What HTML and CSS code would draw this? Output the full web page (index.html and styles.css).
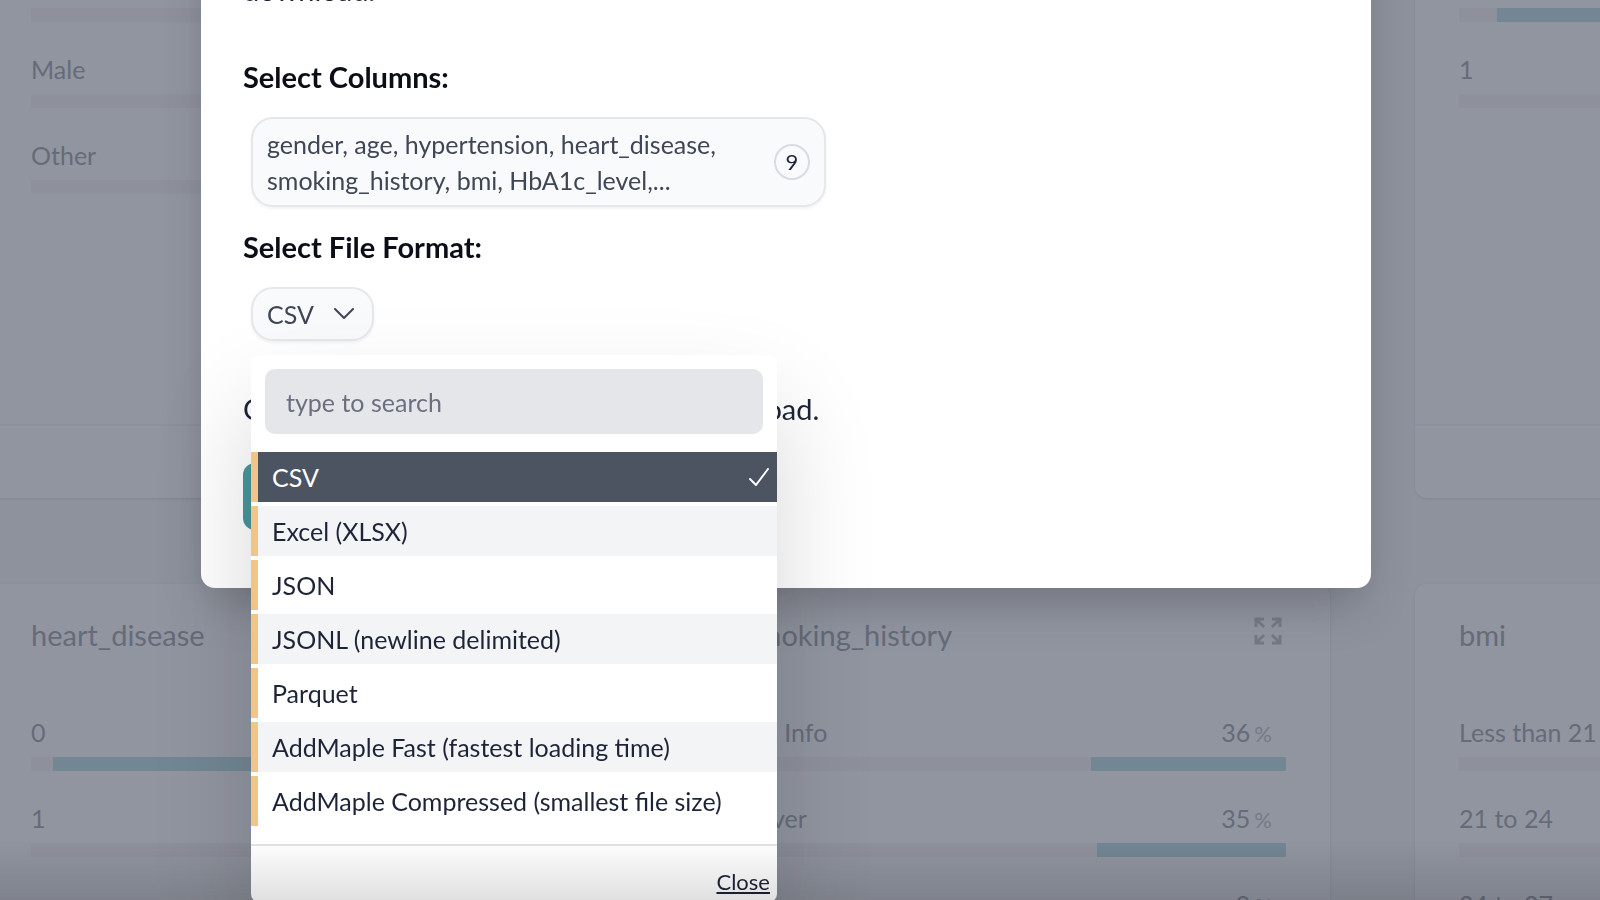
FILE: index.html
```html
<!DOCTYPE html>
<html lang="en">
<head>
    <meta charset="UTF-8">
    <meta name="viewport" content="width=device-width, initial-scale=1.0">
    <title>AddMaple - Download Data</title>
    <link rel="stylesheet" href="styles.css">
</head>
<body>
    <main class="board">
        <section class="card">
            <header class="card-header"><h2>gender</h2></header>
            <div class="row"><div class="row-label"><span>Female</span></div><div class="bar"><div class="fill" style="width: 58%"></div></div></div>
            <div class="row"><div class="row-label"><span>Male</span></div><div class="bar"><div class="fill" style="width: 41%"></div></div></div>
            <div class="row"><div class="row-label"><span>Other</span></div><div class="bar"></div></div>
            <footer class="card-footer"></footer>
        </section>
        <section class="card">
            <header class="card-header"><h2>age</h2></header>
            <footer class="card-footer"></footer>
        </section>
        <section class="card">
            <header class="card-header"><h2>hypertension</h2></header>
            <div class="row"><div class="row-label"><span>0</span></div><div class="bar"><div class="fill" style="width: 93%"></div></div></div>
            <div class="row"><div class="row-label"><span>1</span></div><div class="bar"><div class="fill" style="width: 7%"></div></div></div>
            <footer class="card-footer"></footer>
        </section>
        <section class="card">
            <header class="card-header"><h2>heart_disease</h2></header>
            <div class="row"><div class="row-label"><span>0</span></div><div class="bar"><div class="fill" style="width: 96%"></div></div></div>
            <div class="row"><div class="row-label"><span>1</span></div><div class="bar"><div class="fill" style="width: 4%"></div></div></div>
            <footer class="card-footer"></footer>
        </section>
        <section class="card">
            <header class="card-header">
                <h2>smoking_history</h2>
                <svg class="expand" viewBox="0 0 28 28" width="28" height="28" fill="none" stroke="currentColor" stroke-width="3">
                    <path d="M2 10V2h8M2 2l8 8M18 2h8v8M26 2l-8 8M2 18v8h8M2 26l8-8M18 26h8v-8M26 26l-8-8"/>
                </svg>
            </header>
            <div class="row"><div class="row-label"><span>No Info</span><span>36<small>%</small></span></div><div class="bar"><div class="fill" style="width: 36%"></div></div></div>
            <div class="row"><div class="row-label"><span>never</span><span>35<small>%</small></span></div><div class="bar"><div class="fill" style="width: 35%"></div></div></div>
            <div class="row"><div class="row-label"><span>former</span><span>9<small>%</small></span></div><div class="bar"><div class="fill" style="width: 9%"></div></div></div>
            <footer class="card-footer"></footer>
        </section>
        <section class="card">
            <header class="card-header"><h2>bmi</h2></header>
            <div class="row"><div class="row-label"><span>Less than 21</span></div><div class="bar"><div class="fill" style="width: 14%"></div></div></div>
            <div class="row"><div class="row-label"><span>21 to 24</span></div><div class="bar"><div class="fill" style="width: 14%"></div></div></div>
            <div class="row"><div class="row-label"><span>24 to 27</span></div><div class="bar"><div class="fill" style="width: 14%"></div></div></div>
            <footer class="card-footer"></footer>
        </section>
    </main>

    <div class="overlay">
        <div class="modal" role="dialog" aria-label="Download data">
            <p class="intro">Choose the columns and the file format to<br>download.</p>

            <h3>Select Columns:</h3>
            <button type="button" class="picker columns">
                <span class="columns-text">gender, age, hypertension, heart_disease, smoking_history, bmi, HbA1c_level,...</span>
                <span class="count">9</span>
            </button>

            <h3>Select File Format:</h3>
            <div class="format">
                <button type="button" class="picker" id="formatButton" aria-expanded="true">
                    CSV
                    <svg viewBox="0 0 20 12" width="20" height="12" fill="none" stroke="currentColor" stroke-width="2" stroke-linecap="round" stroke-linejoin="round">
                        <path d="M1 1l9 9 9-9"/>
                    </svg>
                </button>
                <div class="menu" id="formatMenu">
                    <input type="text" class="search" id="search" placeholder="type to search" aria-label="Search formats">
                    <ul class="options">
                        <li><button type="button" class="option selected">CSV
                            <svg viewBox="0 0 20 18" width="20" height="18" fill="none" stroke="currentColor" stroke-width="2" stroke-linecap="round" stroke-linejoin="round">
                                <path d="M1 11l6 6L19 1"/>
                            </svg>
                        </button></li>
                        <li><button type="button" class="option">Excel (XLSX)</button></li>
                        <li><button type="button" class="option">JSON</button></li>
                        <li><button type="button" class="option">JSONL (newline delimited)</button></li>
                        <li><button type="button" class="option">Parquet</button></li>
                        <li><button type="button" class="option">AddMaple Fast (fastest loading time)</button></li>
                        <li><button type="button" class="option">AddMaple Compressed (smallest file size)</button></li>
                    </ul>
                    <div class="menu-footer">
                        <a href="#" id="closeMenu">Close</a>
                    </div>
                </div>
            </div>

            <p class="hint">Click the button below to start the download.</p>
            <button type="button" class="download">Save</button>
        </div>
    </div>
    <div class="bottom-shade"></div>

    <script>
        const menu = document.getElementById('formatMenu');
        const formatButton = document.getElementById('formatButton');

        function setOpen(open) {
            menu.hidden = !open;
            formatButton.setAttribute('aria-expanded', open);
        }

        formatButton.addEventListener('click', () => setOpen(menu.hidden));
        document.getElementById('closeMenu').addEventListener('click', (e) => {
            e.preventDefault();
            setOpen(false);
        });

        // Filter the options while typing
        document.getElementById('search').addEventListener('input', (e) => {
            const term = e.target.value.toLowerCase();
            document.querySelectorAll('.options li').forEach((li) => {
                li.hidden = !li.textContent.toLowerCase().includes(term);
            });
        });
    </script>
</body>
</html>
```
FILE: styles.css
```css
* {
    box-sizing: border-box;
}
body {
    margin: 0;
    height: 100vh;
    overflow: hidden;
    font-family: Lato, sans-serif;
    font-size: 25px;
    background: #f7f8f9;
}
h2, h3, p, ul {
    margin: 0;
    padding: 0;
}
button, input {
    font: inherit;
}
[hidden] {
    display: none !important;
}

/* chart cards */
.board {
    display: grid;
    grid-template-columns: repeat(3, minmax(629px, 39%));
    grid-auto-rows: 663px;
    gap: 86px 85px;
    margin: -165px 0 0 -13px;
    color: #a9abb0;
}
.card {
    display: flex;
    flex-direction: column;
    padding: 0 44px;
    background: white;
    border-radius: 12px;
    box-shadow: 0 1px 3px rgba(0, 0, 0, 0.1);
}
.card-header {
    display: flex;
    justify-content: space-between;
    padding: 31px 4px 0 0;
    height: 131px;
}
.card-header h2 {
    font-size: 29px;
    line-height: 40px;
    font-weight: 400;
}
.expand {
    margin-top: 2px;
    color: #c6c8cd;
}
.row {
    height: 86px;
}
.row-label {
    display: flex;
    justify-content: space-between;
    padding-right: 14px;
    height: 42px;
    line-height: 34px;
}
.row-label small {
    margin-left: 4px;
    font-size: 22px;
    color: #c8c9ce;
}
.bar {
    display: flex;
    justify-content: flex-end;
    height: 14px;
    background: #f9f4f6;
    border-radius: 2px;
    overflow: hidden;
}
.fill {
    background: #c1e1e5;
}
.card-footer {
    height: 74px;
    margin: auto -44px 0;
    border-top: 2px solid #f3f4f6;
}

/* dialog */
.overlay {
    position: fixed;
    inset: 0;
    display: flex;
    justify-content: center;
    align-items: flex-start;
    padding-right: 28px;
    background: rgba(35, 43, 65, 0.5);
}
.modal {
    width: 1170px;
    max-width: 92%;
    margin-top: -122px;
    padding: 52px 42px 58px;
    background: white;
    border-radius: 14px;
    box-shadow: 0 24px 50px -12px rgba(0, 0, 0, 0.25);
    color: #1e2438;
}
.intro, .hint {
    font-size: 29px;
    line-height: 40px;
}
.modal h3 {
    font-size: 29px;
    line-height: 40px;
    color: #0b0d17;
}
.intro {
    margin-bottom: 47px;
}
.picker {
    display: flex;
    align-items: center;
    gap: 20px;
    margin: 20px 0 0 8px;
    padding: 7px 18px 7px 14px;
    border: 2px solid #e5e7eb;
    border-radius: 22px;
    background: #f9fafc;
    box-shadow: 0 2px 3px rgba(0, 0, 0, 0.05);
    color: #3f4655;
    line-height: 36px;
}
.columns {
    justify-content: space-between;
    width: 575px;
    margin-bottom: 20px;
    padding-right: 14px;
    text-align: left;
}
.columns-text {
    width: 470px;
}
.count {
    width: 36px;
    height: 36px;
    border: 2px solid #d9dbe0;
    border-radius: 50%;
    font-size: 22px;
    line-height: 32px;
    text-align: center;
    color: #1f2636;
}
.format {
    position: relative;
}
.menu {
    position: absolute;
    top: 68px;
    left: 8px;
    width: 526px;
    padding-top: 14px;
    background: white;
    border-radius: 8px;
    box-shadow: 0 50px 100px rgba(0, 0, 0, 0.16);
}
.search {
    display: block;
    width: calc(100% - 28px);
    height: 65px;
    margin: 0 14px 18px;
    padding: 0 21px;
    border: 0;
    border-radius: 10px;
    background: #e5e6ea;
}
.search::placeholder {
    color: #6b7080;
    opacity: 1;
}
.options {
    display: flex;
    flex-direction: column;
    gap: 4px;
    list-style: none;
}
.option {
    display: flex;
    justify-content: space-between;
    align-items: center;
    width: 100%;
    height: 50px;
    padding: 0 8px 0 14px;
    border: 0;
    border-left: 7px solid #f0c587;
    background: white;
    color: #1e2438;
    text-align: left;
}
.options li:nth-child(even) .option {
    background: #f2f4f6;
}
.options .selected {
    background: #4c5361;
    color: white;
}
.menu-footer {
    margin-top: 18px;
    padding: 18px 7px 2px;
    border-top: 2px solid #e2e4e8;
    line-height: 36px;
    font-size: 22px;
    text-align: right;
}
.menu-footer a {
    color: #1e2438;
}
.hint {
    margin-top: 48px;
}
.download {
    margin-top: 34px;
    padding: 0 28px;
    height: 67px;
    border: 0;
    border-radius: 12px;
    background: #48969b;
    color: white;
}
.bottom-shade {
    position: fixed;
    left: 0;
    right: 0;
    bottom: 0;
    height: 60px;
    background: linear-gradient(rgba(0, 0, 0, 0), rgba(0, 0, 0, 0.12));
    pointer-events: none;
}
```
